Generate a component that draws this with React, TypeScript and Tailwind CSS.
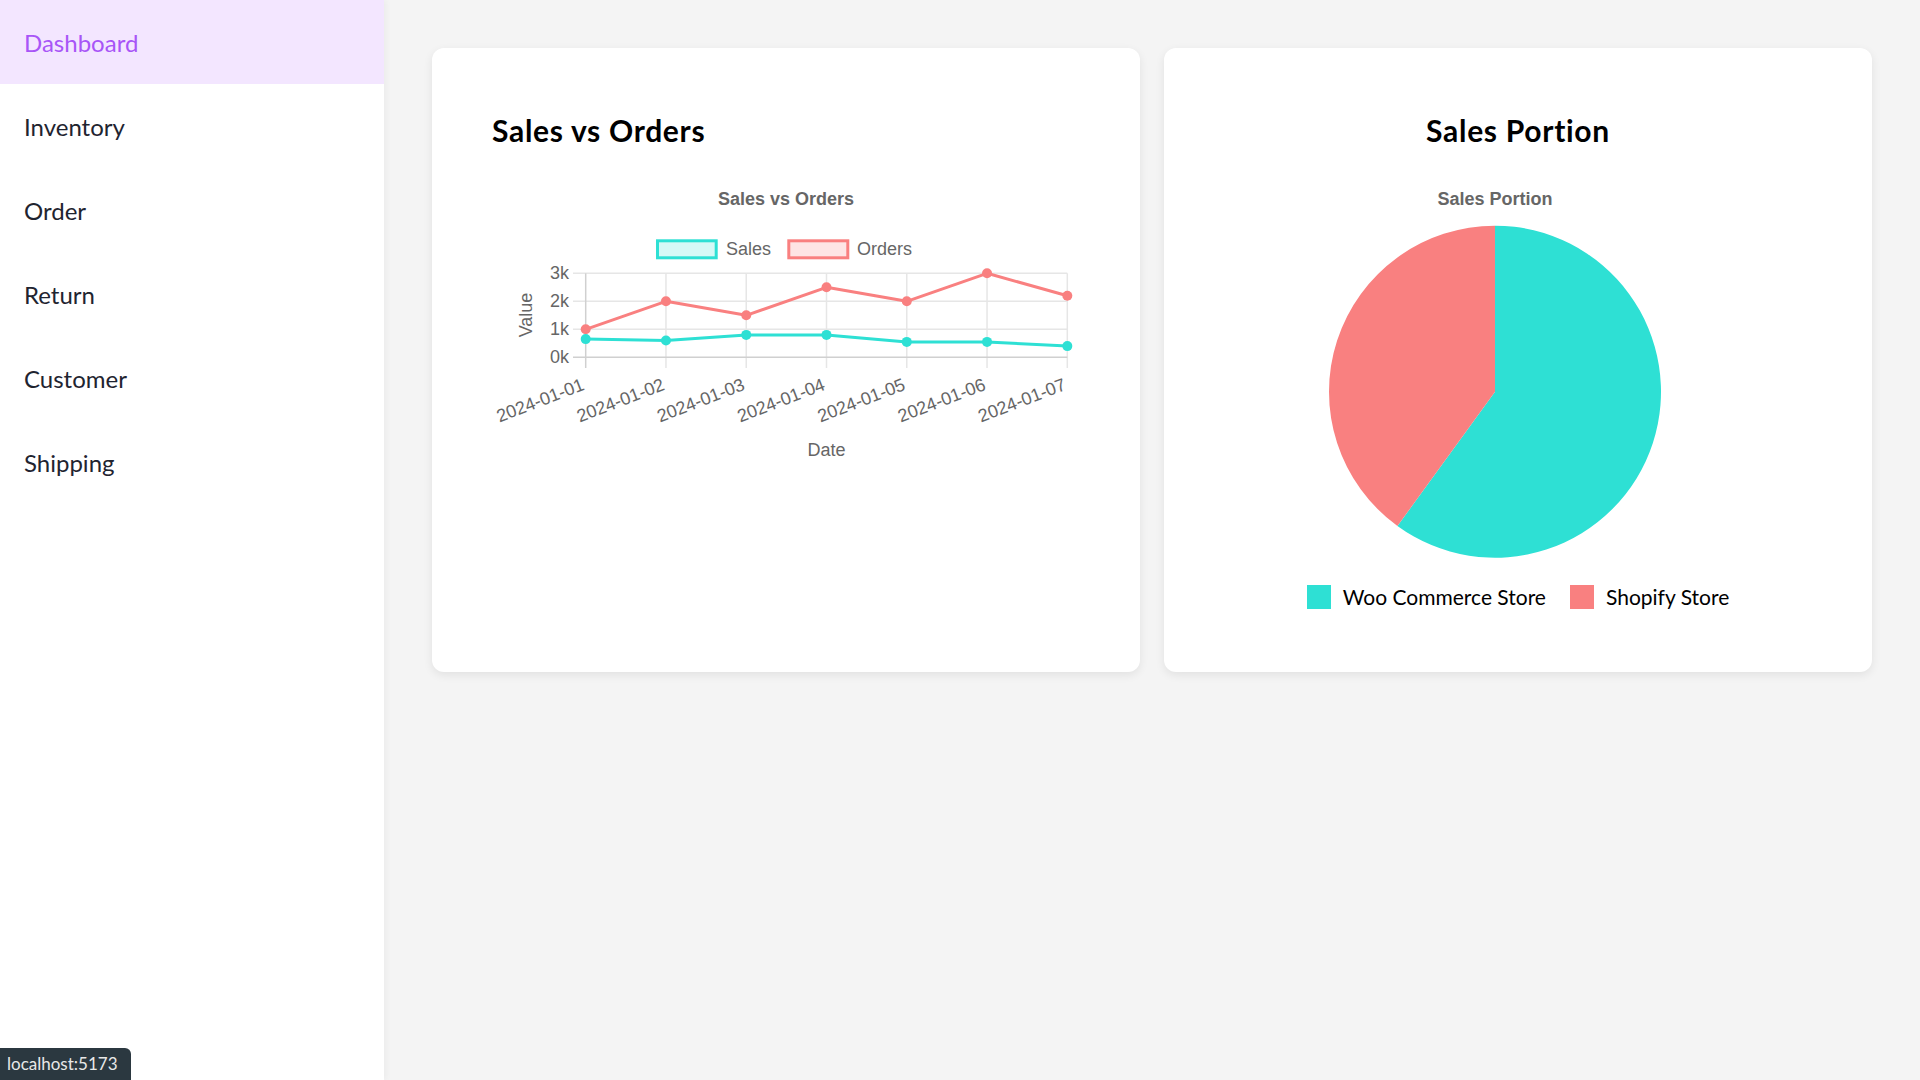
import React from "react";

const navItems = ["Dashboard", "Inventory", "Order", "Return", "Customer", "Shipping"];

const dates = ["2024-01-01", "2024-01-02", "2024-01-03", "2024-01-04", "2024-01-05", "2024-01-06", "2024-01-07"];
const sales = [650, 600, 800, 800, 550, 550, 400];
const orders = [1000, 2000, 1500, 2500, 2000, 3000, 2200];

const TEAL = "#2ee0d4";
const RED = "#f98080";

const xAt = (i: number) => 93.7 + 80.27 * i;
const yAt = (v: number) => 183.3 - v * 0.028;

function SalesChart() {
  const line = (data: number[]) => data.map((v, i) => `${i === 0 ? "M" : "L"}${xAt(i)} ${yAt(v)}`).join(" ");
  return (
    <svg width={588} height={294} className="block" style={{ fontFamily: '"Liberation Sans", Arial, sans-serif' }}>
      <text x={294} y={26.5} textAnchor="middle" dominantBaseline="middle" fontSize={18} fontWeight={700} fill="#666">
        Sales vs Orders
      </text>

      {/* legend */}
      <rect x={165.5} y={66.8} width={58.7} height={17} fill="#d5f9f6" stroke={TEAL} strokeWidth={3} />
      <text x={234} y={76} dominantBaseline="middle" fontSize={18} fill="#666">Sales</text>
      <rect x={296.8} y={66.8} width={59} height={17} fill="#fee5e5" stroke={RED} strokeWidth={3} />
      <text x={365} y={76} dominantBaseline="middle" fontSize={18} fill="#666">Orders</text>

      {/* grid */}
      {[1000, 2000, 3000].map((v) => (
        <line key={v} x1={81} x2={575.3} y1={yAt(v)} y2={yAt(v)} stroke="#e6e6e6" strokeWidth={1.5} />
      ))}
      {dates.map((_, i) =>
        i === 0 ? null : <line key={i} x1={xAt(i)} x2={xAt(i)} y1={99.3} y2={194} stroke="#e6e6e6" strokeWidth={1.5} />
      )}
      <line x1={81} x2={575.3} y1={yAt(0)} y2={yAt(0)} stroke="#d0d0d0" strokeWidth={1.5} />
      <line x1={xAt(0)} x2={xAt(0)} y1={99.3} y2={194} stroke="#d0d0d0" strokeWidth={1.5} />

      {/* y ticks */}
      {[0, 1000, 2000, 3000].map((v) => (
        <text key={v} x={77} y={yAt(v) + 1} textAnchor="end" dominantBaseline="middle" fontSize={18} fill="#666">
          {v / 1000}k
        </text>
      ))}
      <text x={35} y={141} textAnchor="middle" dominantBaseline="middle" fontSize={18} fill="#666" transform="rotate(-90 35 141)">
        Value
      </text>

      {/* x ticks */}
      {dates.map((d, i) => (
        <text
          key={d}
          x={xAt(i) - 2}
          y={211}
          textAnchor="end"
          dominantBaseline="middle"
          fontSize={18}
          fill="#666"
          transform={`rotate(-21 ${xAt(i) - 2} 211)`}
        >
          {d}
        </text>
      ))}
      <text x={334.5} y={277} textAnchor="middle" dominantBaseline="middle" fontSize={18} fill="#666">
        Date
      </text>

      {/* data */}
      <path d={line(orders)} fill="none" stroke={RED} strokeWidth={3} strokeLinejoin="round" />
      {orders.map((v, i) => (
        <circle key={i} cx={xAt(i)} cy={yAt(v)} r={5} fill={RED} />
      ))}
      <path d={line(sales)} fill="none" stroke={TEAL} strokeWidth={3} strokeLinejoin="round" />
      {sales.map((v, i) => (
        <circle key={i} cx={xAt(i)} cy={yAt(v)} r={5} fill={TEAL} />
      ))}
    </svg>
  );
}

function PortionChart() {
  const cx = 271;
  const cy = 217.7;
  const r = 166;
  const a = (216 * Math.PI) / 180;
  const ex = cx + r * Math.sin(a);
  const ey = cy - r * Math.cos(a);
  return (
    <svg width={588} height={384} className="block" style={{ fontFamily: '"Liberation Sans", Arial, sans-serif' }}>
      <text x={cx} y={26.5} textAnchor="middle" dominantBaseline="middle" fontSize={18} fontWeight={700} fill="#666">
        Sales Portion
      </text>
      <path d={`M${cx} ${cy} L${cx} ${cy - r} A${r} ${r} 0 1 1 ${ex} ${ey} Z`} fill={TEAL} />
      <path d={`M${cx} ${cy} L${ex} ${ey} A${r} ${r} 0 0 1 ${cx} ${cy - r} Z`} fill={RED} />
    </svg>
  );
}

export default function App() {
  return (
    <div className="flex h-[1080px] bg-[#f4f4f4]" style={{ fontFamily: 'Lato, "Noto Sans", sans-serif' }}>
      <aside className="w-[384px] shrink-0 bg-white shadow-[2px_0_6px_rgba(0,0,0,0.04)]">
        <nav className="flex flex-col">
          {navItems.map((item, i) => (
            <div
              key={item}
              className={
                i === 0
                  ? "h-[84px] flex items-center px-6 pt-[2px] text-[24px] text-[#a855f7] bg-[#f3e6ff]"
                  : "h-[84px] flex items-center px-6 pt-[2px] text-[24px] text-[#1f2430]"
              }
            >
              {item}
            </div>
          ))}
        </nav>
      </aside>

      <main className="flex-1 p-12">
        <div className="grid grid-cols-2 gap-6">
          <section className="bg-white rounded-xl p-[60px] shadow-[0_3px_10px_rgba(0,0,0,0.08)]">
            <h2 className="text-[30px] leading-[40px] tracking-[0.7px] font-bold text-black mb-6 pt-[2px]">Sales vs Orders</h2>
            <SalesChart />
          </section>

          <section className="bg-white rounded-xl p-[60px] shadow-[0_3px_10px_rgba(0,0,0,0.08)]">
            <h2 className="text-[30px] leading-[40px] tracking-[0.7px] font-bold text-black mb-6 pt-[2px] text-center">
              Sales Portion
            </h2>
            <PortionChart />
            <div className="mt-6 h-[30px] flex items-center justify-center gap-6">
              <div className="flex items-center gap-3">
                <span className="w-6 h-6 bg-[#2ee0d4]" />
                <span className="text-[21px] text-black">Woo Commerce Store</span>
              </div>
              <div className="flex items-center gap-3">
                <span className="w-6 h-6 bg-[#f98080]" />
                <span className="text-[21px] text-black">Shopify Store</span>
              </div>
            </div>
          </section>
        </div>
      </main>

      <div className="fixed bottom-0 left-0 h-8 w-[131px] flex items-center pl-[7px] bg-[#2b3840] rounded-tr-md text-[17px] text-[#e8e8e8]">
        localhost:5173
      </div>
    </div>
  );
}
